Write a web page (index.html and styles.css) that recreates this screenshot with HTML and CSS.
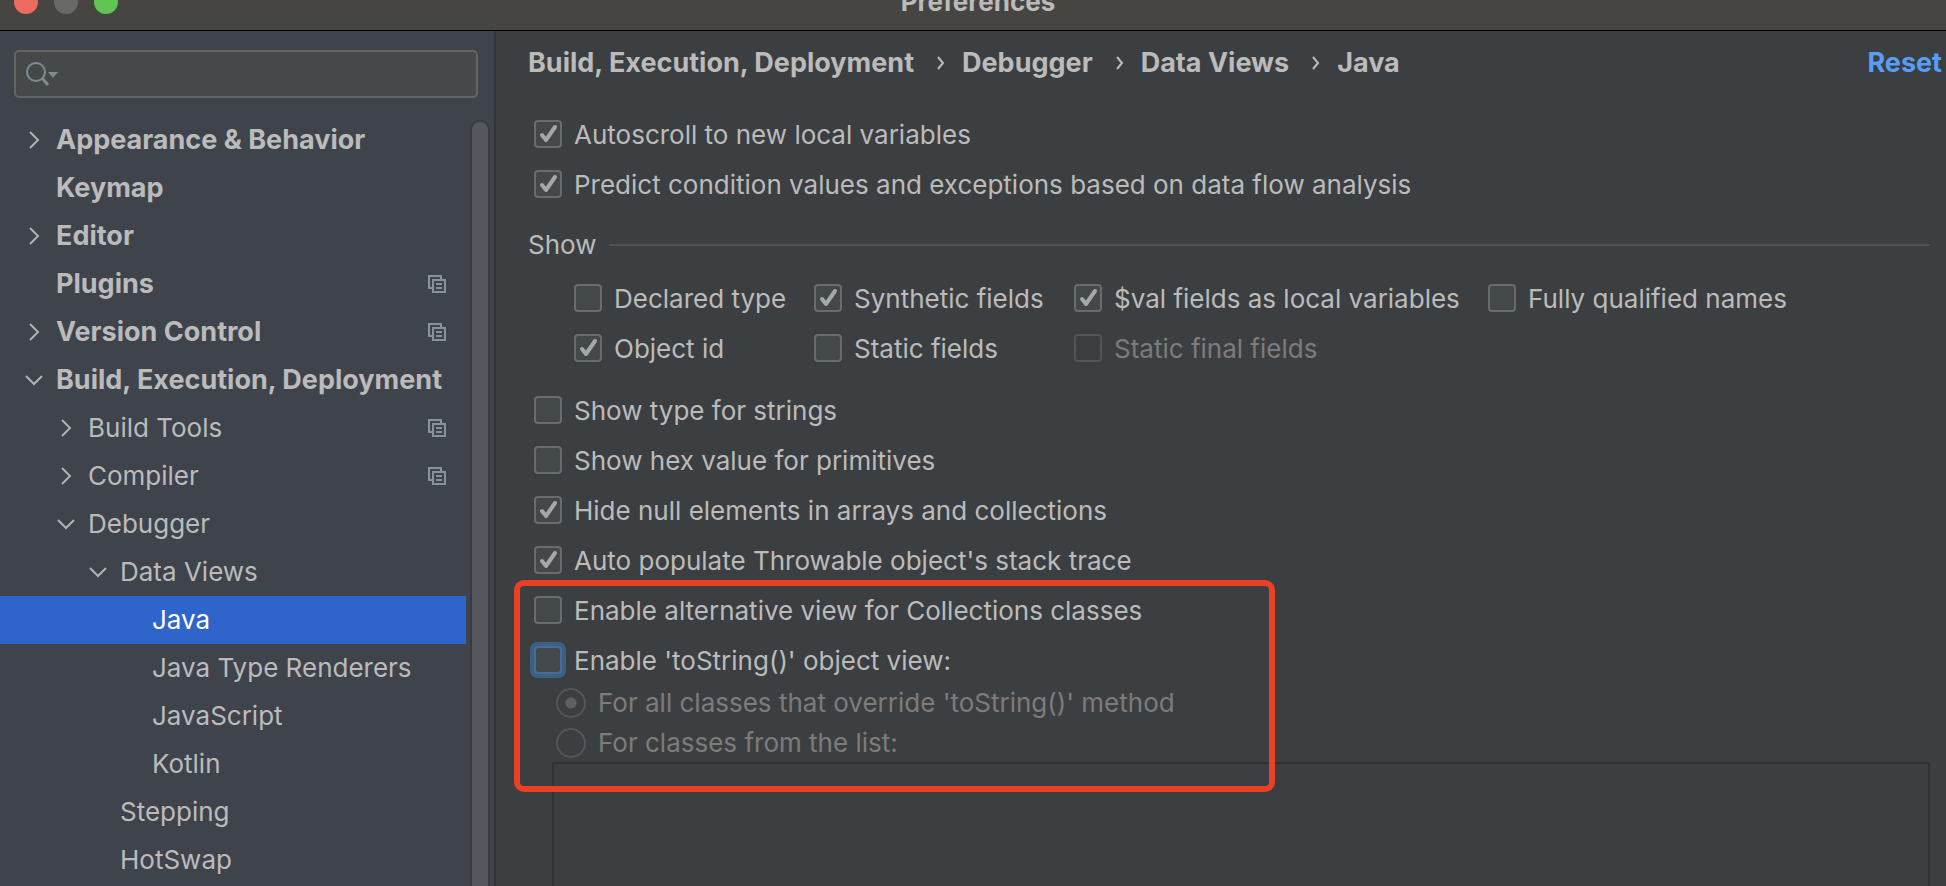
FILE: index.html
```html
<!DOCTYPE html>
<html lang="en">
<head>
<meta charset="UTF-8">
<title>Preferences</title>
<link rel="stylesheet" href="styles.css">
</head>
<body>

<svg class="defs" aria-hidden="true">
  <symbol id="right" viewBox="0 0 20 20"><path d="M6 2l8 8-8 8"/></symbol>
  <symbol id="down" viewBox="0 0 20 20"><path d="M2 6l8 8 8-8"/></symbol>
  <symbol id="copy" viewBox="0 0 18 18"><path d="M4 13H1V1h12v3M5 5h12v12H5zM8 9h6M8 13h6"/></symbol>
  <symbol id="crumb" viewBox="0 0 8 14"><path d="M1 1l5 6-5 6"/></symbol>
</svg>

<header class="titlebar">
  <div class="lights">
    <span class="light red"></span>
    <span class="light gray"></span>
    <span class="light green"></span>
  </div>
  <h1>Preferences</h1>
</header>

<div class="window">
  <aside class="sidebar">
    <label class="search">
      <svg width="34" height="26" viewBox="0 0 34 26">
        <circle cx="12" cy="11" r="9"/>
        <path d="M18 17l6 7" class="handle"/>
        <path d="M24 11h10l-5 6z" class="drop"/>
      </svg>
      <input type="text" aria-label="Search">
    </label>
    <div class="tree-pane">
      <ul class="tree">
        <li class="top"><svg class="arrow"><use href="#right"/></svg>Appearance &amp; Behavior</li>
        <li class="top leaf">Keymap</li>
        <li class="top"><svg class="arrow"><use href="#right"/></svg>Editor</li>
        <li class="top leaf">Plugins<svg class="copy"><use href="#copy"/></svg></li>
        <li class="top"><svg class="arrow"><use href="#right"/></svg>Version Control<svg class="copy"><use href="#copy"/></svg></li>
        <li class="top"><svg class="arrow"><use href="#down"/></svg>Build, Execution, Deployment</li>
        <li class="level2"><svg class="arrow"><use href="#right"/></svg>Build Tools<svg class="copy"><use href="#copy"/></svg></li>
        <li class="level2"><svg class="arrow"><use href="#right"/></svg>Compiler<svg class="copy"><use href="#copy"/></svg></li>
        <li class="level2"><svg class="arrow"><use href="#down"/></svg>Debugger</li>
        <li class="level3"><svg class="arrow"><use href="#down"/></svg>Data Views</li>
        <li class="level4 leaf selected">Java</li>
        <li class="level4 leaf">Java Type Renderers</li>
        <li class="level4 leaf">JavaScript</li>
        <li class="level4 leaf">Kotlin</li>
        <li class="level3 leaf">Stepping</li>
        <li class="level3 leaf">HotSwap</li>
      </ul>
      <div class="scrollbar"></div>
    </div>
  </aside>

  <main class="content">
    <nav class="crumbs">
      <span>Build, Execution, Deployment</span>
      <svg><use href="#crumb"/></svg>
      <span>Debugger</span>
      <svg><use href="#crumb"/></svg>
      <span>Data Views</span>
      <svg><use href="#crumb"/></svg>
      <span>Java</span>
      <a href="#" class="reset">Reset</a>
    </nav>

    <label class="option"><input type="checkbox" checked>Autoscroll to new local variables</label>
    <label class="option"><input type="checkbox" checked>Predict condition values and exceptions based on data flow analysis</label>

    <h2 class="group-title">Show</h2>
    <div class="show-grid">
      <label class="option"><input type="checkbox">Declared type</label>
      <label class="option"><input type="checkbox" checked>Synthetic fields</label>
      <label class="option"><input type="checkbox" checked>$val fields as local variables</label>
      <label class="option"><input type="checkbox">Fully qualified names</label>
      <label class="option"><input type="checkbox" checked>Object id</label>
      <label class="option"><input type="checkbox">Static fields</label>
      <label class="option"><input type="checkbox" disabled>Static final fields</label>
    </div>

    <label class="option"><input type="checkbox">Show type for strings</label>
    <label class="option"><input type="checkbox">Show hex value for primitives</label>
    <label class="option"><input type="checkbox" checked>Hide null elements in arrays and collections</label>
    <label class="option"><input type="checkbox" checked>Auto populate Throwable object's stack trace</label>

    <section class="views">
      <label class="option"><input type="checkbox">Enable alternative view for Collections classes</label>
      <label class="option"><input type="checkbox" class="focused">Enable 'toString()' object view:</label>
      <div class="radios">
        <label class="option radio"><input type="radio" name="classes" checked disabled>For all classes that override 'toString()' method</label>
        <label class="option radio"><input type="radio" name="classes" disabled>For classes from the list:</label>
      </div>
      <div class="class-list"></div>
      <div class="highlight"></div>
    </section>
  </main>
</div>

</body>
</html>
```
FILE: styles.css
```css
* {
  box-sizing: border-box;
}

body {
  display: flex;
  flex-direction: column;
  height: 100vh;
  margin: 0;
  overflow: hidden;
  background: #3c3f41;
  color: #bbbbbb;
  font-family: Inter, "Liberation Sans", sans-serif;
  font-size: 26px;
  line-height: 32px;
}

svg {
  flex: none;
  fill: none;
}

.defs {
  position: absolute;
  width: 0;
  height: 0;
}

/* title bar, its upper half is off screen */
.titlebar {
  display: grid;
  grid-template-columns: 1fr auto 1fr;
  align-content: end;
  align-items: end;
  flex: none;
  height: 31px;
  overflow: hidden;
  background: #464541;
  border-bottom: 1px solid #000;
}

.lights {
  display: flex;
  gap: 16px;
  padding: 0 14px 16px;
}

.light {
  width: 24px;
  height: 24px;
  border-radius: 50%;
}

.red { background: #ed6a5e; }
.gray { background: #686866; }
.green { background: #61c554; }

h1 {
  margin: 0;
  padding-bottom: 12px;
  padding-left: 10px;
  font-size: 26px;
  line-height: 32px;
}

.window {
  display: flex;
  flex: 1;
  min-height: 0;
}

.sidebar {
  display: flex;
  flex-direction: column;
  flex: none;
  width: 496px;
  padding-top: 19px;
  background: #3f434c;
  border-right: 2px solid #323537;
}

.search {
  display: flex;
  align-items: center;
  flex: none;
  height: 48px;
  margin: 0 16px 18px 14px;
  padding-left: 8px;
  background: #45494a;
  border: 2px solid #646464;
  border-radius: 5px;
}

.search svg {
  stroke: #7f8b91;
  stroke-width: 2;
}

.search .handle {
  stroke-width: 3;
}

.search .drop {
  fill: #7f8b91;
  stroke: none;
}

.search input {
  flex: 1;
  min-width: 0;
  background: none;
  border: none;
  outline: none;
  color: inherit;
  font: inherit;
}

.tree-pane {
  display: flex;
  flex: 1;
  min-height: 0;
}

.tree {
  flex: 1;
  margin: 0 4px 0 0;
  padding: 0;
  list-style: none;
}

.tree li {
  display: flex;
  align-items: center;
  height: 48px;
  padding-right: 20px;
  padding-left: 24px;
  white-space: nowrap;
}

.tree .top {
  font-size: 27px;
  font-weight: bold;
}

.tree .level2 { padding-left: 56px; }
.tree .level3 { padding-left: 88px; }
.tree .level4 { padding-left: 120px; }

.tree .leaf::before {
  content: "";
  width: 32px;
}

.tree .selected {
  background: #2f65ca;
  color: #fff;
}

.arrow {
  width: 20px;
  height: 20px;
  margin-right: 12px;
  stroke: #afb1b3;
  stroke-width: 2;
}

.copy {
  width: 18px;
  height: 18px;
  margin-left: auto;
  stroke: #87939a;
  stroke-width: 2;
}

.scrollbar {
  width: 20px;
  margin: 4px 4px -20px 0;
  background: #54575e;
  border: 2px solid #383b40;
  border-radius: 10px;
}

.content {
  display: flex;
  flex-direction: column;
  flex: 1;
  min-width: 0;
  padding: 16px 16px 0 32px;
}

.crumbs {
  display: flex;
  align-items: center;
  margin-bottom: 30px;
  font-size: 27px;
  font-weight: bold;
  white-space: nowrap;
}

.crumbs svg {
  width: 8px;
  height: 14px;
  margin: 0 17px 0 23px;
  stroke: #bbbbbb;
  stroke-width: 2;
}

.reset {
  margin-right: -12px;
  margin-left: auto;
  color: #589df6;
  text-decoration: none;
}

.option {
  display: flex;
  align-items: center;
  flex: none;
  height: 50px;
  padding-top: 2px;
  padding-left: 6px;
  white-space: nowrap;
}

.option input {
  flex: none;
  width: 28px;
  height: 28px;
  margin: 0 12px 2px 0;
  appearance: none;
  background: #43494a;
  border: 2px solid #6b6b6b;
  border-radius: 4px;
}

.option input[type="checkbox"]:checked {
  background-image: url("data:image/svg+xml;charset=UTF-8,%3csvg xmlns='http://www.w3.org/2000/svg' viewBox='0 0 24 24' fill='none' stroke='%23a7a7a7' stroke-width='4' stroke-linecap='round' stroke-linejoin='round'%3e%3cpath d='M6 13l4 5 9-13'/%3e%3c/svg%3e");
}

.option input:disabled {
  background-color: transparent;
  border-color: #545556;
}

.option:has(input:disabled) {
  color: #7c7c7c;
}

.option .focused {
  border-color: #466d94;
  box-shadow: 0 0 0 4px #3d6185;
}

.group-title {
  display: flex;
  align-items: center;
  gap: 13px;
  margin: 20px 0 12px;
  font-size: 26px;
  font-weight: normal;
}

.group-title::after {
  content: "";
  flex: 1;
  height: 2px;
  background: #515151;
}

.show-grid {
  display: grid;
  grid-template-columns: 240px 260px 414px auto;
  justify-content: start;
  margin-bottom: 12px;
  padding-left: 40px;
}

.views {
  position: relative;
  display: flex;
  flex-direction: column;
  flex: 1;
}

.radios {
  margin: -2px 0 -1px;
}

.option.radio {
  height: 40px;
  padding-top: 0;
  padding-left: 28px;
}

.option.radio input {
  width: 30px;
  height: 30px;
  margin-bottom: 0;
  border-radius: 50%;
}

.option.radio input:checked {
  background: radial-gradient(circle, #606060 5px, transparent 6px);
}

.class-list {
  flex: 1;
  margin-left: 24px;
  border: 2px solid #323232;
  border-bottom: none;
}

.highlight {
  position: absolute;
  top: -5px;
  left: -14px;
  width: 761px;
  height: 212px;
  border: 6px solid #ea4025;
  border-radius: 10px;
  pointer-events: none;
}
```
